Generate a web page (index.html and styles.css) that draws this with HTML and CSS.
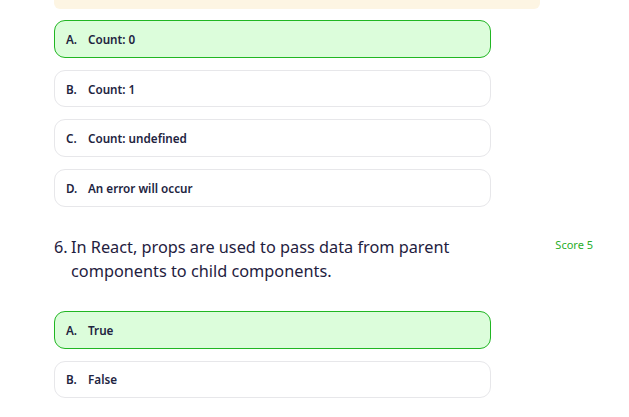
FILE: index.html
```html
<!DOCTYPE html>
<html lang="en">
<head>
<meta charset="utf-8">
<title>Quiz</title>
<link rel="stylesheet" href="styles.css">
</head>
<body>
<div class="page">
  <div class="notice"></div>
  <ul class="options">
    <li class="option correct"><span class="letter">A.</span><span class="label">Count: 0</span></li>
    <li class="option"><span class="letter">B.</span><span class="label">Count: 1</span></li>
    <li class="option"><span class="letter">C.</span><span class="label">Count: undefined</span></li>
    <li class="option"><span class="letter">D.</span><span class="label">An error will occur</span></li>
  </ul>
  <div class="question">
    <div class="q-text"><span class="num">6.</span><span class="body">In React, props are used to pass data from parent components to child components.</span></div>
    <span class="score">Score 5</span>
  </div>
  <ul class="options">
    <li class="option correct"><span class="letter">A.</span><span class="label">True</span></li>
    <li class="option"><span class="letter">B.</span><span class="label">False</span></li>
  </ul>
</div>
</body>
</html>
```
FILE: styles.css
```css
html, body {
  margin: 0;
  padding: 0;
  background: #ffffff;
}
body {
  font-family: "Noto Sans", "Open Sans", sans-serif;
  color: #1f2140;
}
.page {
  padding-left: 54px;
  width: 540px;
}
.notice {
  width: 486px;
  height: 9px;
  background: #fdf5e3;
  border-radius: 0 0 6px 6px;
}
.options {
  list-style: none;
  margin: 11px 0 0 0;
  padding: 0;
  width: 437px;
  display: flex;
  flex-direction: column;
  gap: 12px;
}
.option {
  display: flex;
  align-items: center;
  height: 37.7px;
  box-sizing: border-box;
  padding: 0 11px;
  border: 1px solid #e7e7ea;
  border-radius: 11px;
  font-size: 11.7px;
  font-weight: 600;
  color: #22243f;
}
.option.correct {
  background: #dcfddb;
  border-color: #21b623;
}
.letter {
  width: 22px;
}
.question {
  display: flex;
  justify-content: space-between;
  align-items: flex-start;
  margin-top: 29.5px;
}
.q-text {
  display: flex;
  width: 440px;
  font-size: 16.3px;
  line-height: 23.5px;
  color: #1f2140;
}
.num {
  width: 17px;
  flex: none;
}
.score {
  font-size: 11px;
  line-height: 18px;
  color: #2aae2a;
  padding-right: 1px;
}
.question + .options {
  margin-top: 27.7px;
}
```
